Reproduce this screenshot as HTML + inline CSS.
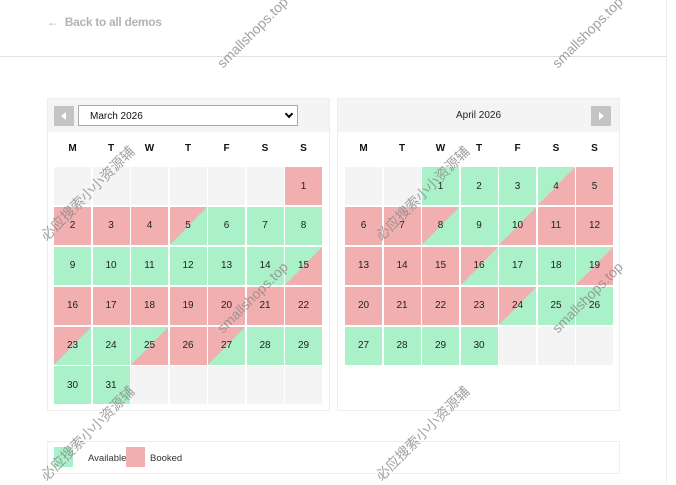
<!DOCTYPE html>
<html><head><meta charset="utf-8"><style>
*{box-sizing:border-box;margin:0;padding:0}
body{width:676px;height:483px;background:#fff;font-family:"Liberation Sans",sans-serif;position:relative;overflow:hidden}
.back{position:absolute;left:47px;top:15px;font-size:12px;font-weight:bold;color:#b4b4b4;letter-spacing:-0.3px}
.back span{font-weight:normal;margin-right:6px}
.hr{position:absolute;left:0;top:56px;width:666px;height:1px;background:#e2e2e2}
.vr{position:absolute;left:666px;top:0;width:1px;height:483px;background:#ececec}
.panel{position:absolute;top:98px;width:283px;height:313px;border:1px solid #eeeeee;background:#fff}
.head{height:33px;background:#f4f4f4;position:relative}
.sel{position:absolute;left:30px;top:6px;width:220px;height:21px;border:1px solid #aaa;background:#fff;font-size:10px;padding:5px 0 0 11px;color:#111}
.sel i{position:absolute;right:5px;top:5px;width:6px;height:6px;border-right:2px solid #000;border-bottom:2px solid #000;transform:rotate(45deg)}
.btn{position:absolute;top:7px;width:20px;height:20px;background:#c3c4c6}
.btn:after{content:"";position:absolute;top:6px;border:4px solid transparent}
.bl{left:6px}.bl:after{left:3px;border-right:5px solid #fff}
.br{right:8px}.br:after{left:8px;border-left:5px solid #fff}
.title{position:absolute;left:0;right:0;top:11px;text-align:center;font-size:10px;color:#222}
.dn{position:absolute;top:44px;left:6px;display:grid;grid-template-columns:repeat(7,37px);column-gap:1.5px;font-size:10px;font-weight:bold;text-align:center;color:#111}
.g{position:absolute;top:68px;left:6px;display:grid;grid-template-columns:repeat(7,37px);grid-auto-rows:38px;column-gap:1.5px;row-gap:1.9px}
.g div{font-size:10px;display:flex;align-items:center;justify-content:center;color:#222}
.e{background:#f4f4f4}
.a{background:#aaf0c8}
.b{background:#f2afaf}
.ba{background:linear-gradient(to bottom right,#f2afaf 50%,#aaf0c8 50%)}
.ab{background:linear-gradient(to bottom right,#aaf0c8 50%,#f2afaf 50%)}
.legend{position:absolute;left:47px;top:441px;width:573px;height:33px;border:1px solid #eeeeee}
.legend .sw{position:absolute;top:5px;width:19px;height:20px}
.legend span{position:absolute;top:11px;font-size:9.5px;color:#333}
.wm{position:absolute;color:#8a8a8a;font-size:14px;transform:rotate(-45deg);transform-origin:left bottom;white-space:nowrap;font-family:"Liberation Sans","Noto Sans CJK SC",sans-serif;opacity:.8}
</style></head><body>
<div class="back"><span>←</span>Back to all demos</div>
<div class="hr"></div><div class="vr"></div>

<div class="panel" style="left:47px">
<div class="head"><div class="btn bl"></div><div class="sel">March 2026<i></i></div></div>
<div class="dn"><div>M</div><div>T</div><div>W</div><div>T</div><div>F</div><div>S</div><div>S</div></div>
<div class="g">
<div class="e"></div><div class="e"></div><div class="e"></div><div class="e"></div><div class="e"></div><div class="e"></div><div class="b">1</div>
<div class="b">2</div><div class="b">3</div><div class="b">4</div><div class="ba">5</div><div class="a">6</div><div class="a">7</div><div class="a">8</div>
<div class="a">9</div><div class="a">10</div><div class="a">11</div><div class="a">12</div><div class="a">13</div><div class="a">14</div><div class="ab">15</div>
<div class="b">16</div><div class="b">17</div><div class="b">18</div><div class="b">19</div><div class="b">20</div><div class="b">21</div><div class="b">22</div>
<div class="ba">23</div><div class="a">24</div><div class="ab">25</div><div class="b">26</div><div class="ba">27</div><div class="a">28</div><div class="a">29</div>
<div class="a">30</div><div class="a">31</div><div class="e"></div><div class="e"></div><div class="e"></div><div class="e"></div><div class="e"></div>
</div></div>

<div class="panel" style="left:337px">
<div class="head"><div class="title">April 2026</div><div class="btn br"></div></div>
<div class="dn" style="left:7px"><div>M</div><div>T</div><div>W</div><div>T</div><div>F</div><div>S</div><div>S</div></div>
<div class="g" style="left:7px">
<div class="e"></div><div class="e"></div><div class="a">1</div><div class="a">2</div><div class="a">3</div><div class="ab">4</div><div class="b">5</div>
<div class="b">6</div><div class="b">7</div><div class="ba">8</div><div class="a">9</div><div class="ab">10</div><div class="b">11</div><div class="b">12</div>
<div class="b">13</div><div class="b">14</div><div class="b">15</div><div class="ba">16</div><div class="a">17</div><div class="a">18</div><div class="ab">19</div>
<div class="b">20</div><div class="b">21</div><div class="b">22</div><div class="b">23</div><div class="ba">24</div><div class="a">25</div><div class="a">26</div>
<div class="a">27</div><div class="a">28</div><div class="a">29</div><div class="a">30</div><div class="e"></div><div class="e"></div><div class="e"></div>
</div></div>

<div class="legend">
<div class="sw a" style="left:6px;background:#aaf0c8"></div><span style="left:40px">Available</span>
<div class="sw b" style="left:78px;width:19px;background:#f2afaf"></div><span style="left:102px">Booked</span>
</div>

<div class="wm" style="left:225px;top:55px">smallshops.top</div>
<div class="wm" style="left:560px;top:55px">smallshops.top</div>
<div class="wm" style="left:50px;top:225px">必应搜索小小资源辅</div>
<div class="wm" style="left:385px;top:225px">必应搜索小小资源辅</div>
<div class="wm" style="left:225px;top:320px">smallshops.top</div>
<div class="wm" style="left:560px;top:320px">smallshops.top</div>
<div class="wm" style="left:50px;top:465px">必应搜索小小资源辅</div>
<div class="wm" style="left:385px;top:465px">必应搜索小小资源辅</div>
</body></html>
